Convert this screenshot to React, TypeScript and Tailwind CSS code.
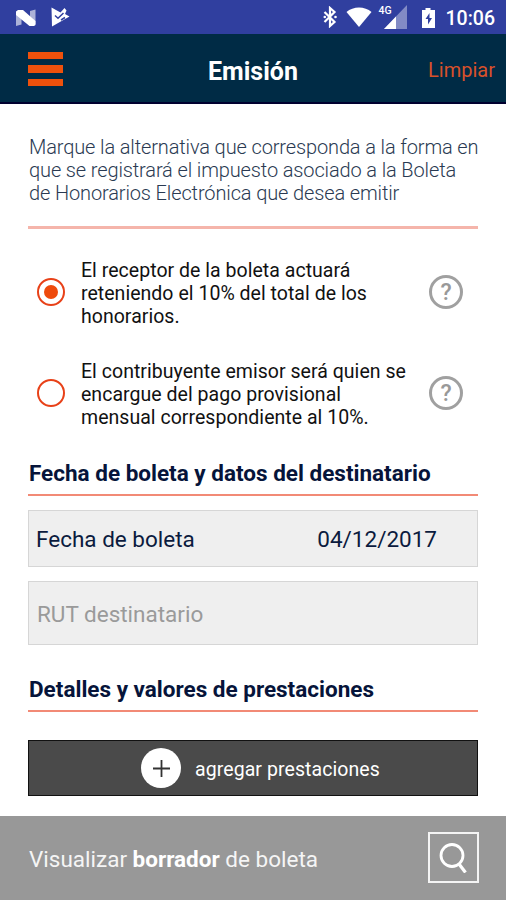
import { useState } from "react";

// ─── Types ───────────────────────────────────────────────

interface TaxOption {
  id: string;
  lines: string[];
}

// ─── Constants ───────────────────────────────────────────

const TAX_OPTIONS: TaxOption[] = [
  {
    id: "receptor",
    lines: ["El receptor de la boleta actuará", "reteniendo el 10% del total de los", "honorarios."],
  },
  {
    id: "emisor",
    lines: ["El contribuyente emisor será quien se", "encargue del pago provisional", "mensual correspondiente al 10%."],
  },
];

// ─── Status bar ──────────────────────────────────────────

function StatusBar() {
  return (
    <div className="flex h-[34px] shrink-0 items-center bg-[#303f9f] text-white">
      <svg className="ml-[15px] mt-px h-[18px] w-[22px]" viewBox="0 0 22 18" aria-hidden="true">
        <path d="M1 3h5.500v12.500L1 17zM15 2l5.500-1.500V15H15z" fill="#fff" opacity=".6" />
        <path d="M1 2.500L3 1h5L20.500 12v4l-1.500 1h-4.500L1 6z" fill="#fff" />
      </svg>
      <svg className="ml-[13px] h-5 w-5" viewBox="0 0 20 20" aria-hidden="true">
        <path d="M1.500.500l9 5L14.500 1l2 2.500-1.500 3.500 4.500 2.500L2 19.500z" fill="#fff" />
        <path d="M5 8.500l3 2.700L13.500 6M11 13l4-2.500" fill="none" stroke="#303f9f" strokeWidth="1.500" />
      </svg>
      <svg className="ml-auto h-[22px] w-[14px]" viewBox="0 0 14 22" aria-hidden="true">
        <path d="M1.500 6l10 10L7 20V2l4.500 4-10 10" fill="none" stroke="#fff" strokeWidth="2.200" />
        <circle cx="1.800" cy="11" r="1.300" fill="#fff" />
        <circle cx="12.500" cy="11" r="1.300" fill="#fff" />
      </svg>
      <svg className="ml-[9px] h-5 w-[26px]" viewBox="0 0 26 20" aria-hidden="true">
        <path d="M.5 5C7-1 19-1 25.500 5L13 20z" fill="#fff" />
      </svg>
      <div className="relative ml-[7px] h-6 w-[28px]">
        <svg className="absolute inset-0 h-6 w-7" viewBox="0 0 28 24" aria-hidden="true">
          <path d="M28 0v24H5z" fill="#fff" opacity=".4" />
          <path d="M17 11.500V24H5z" fill="#fff" />
        </svg>
        <span className="absolute left-0 top-px text-[10.500px] leading-[10px] font-medium">4G</span>
      </div>
      <svg className="ml-[14px] mt-0.5 h-5 w-[15px]" viewBox="0 0 15 20" aria-hidden="true">
        <path d="M1 2h3.500V0h5v2H14v18H1z" fill="#fff" />
        <path d="M8.500 5l-4 6h2.500v5.500l4-6.500H8.500z" fill="#303f9f" />
      </svg>
      <span className="mt-[3px] ml-[10px] mr-[11px] text-[19.500px] leading-none font-medium">10:06</span>
    </div>
  );
}

// ─── Header ──────────────────────────────────────────────

function Header() {
  return (
    <header className="grid h-[70px] shrink-0 grid-cols-3 items-center border-b-2 border-[#00002f] bg-[#002b45]">
      <button type="button" aria-label="Menú" className="mt-0.5 ml-[28px] flex w-[35px] flex-col gap-[6px]">
        <span className="h-[7.500px] bg-[#ee510c]" />
        <span className="h-[7.500px] bg-[#ee510c]" />
        <span className="h-[7.500px] bg-[#ee510c]" />
      </button>
      <h1 className="pt-1.5 text-center text-[25px] leading-none font-bold text-white">Emisión</h1>
      <button type="button" className="mr-[11px] pt-1 text-right text-[20px] leading-none text-[#d8512b]">
        Limpiar
      </button>
    </header>
  );
}

// ─── Tax option ──────────────────────────────────────────

function TaxOptionRow({
  option,
  checked,
  onSelect,
}: {
  option: TaxOption;
  checked: boolean;
  onSelect: () => void;
}) {
  return (
    <div className="flex items-center pl-[9px] pr-[15px]">
      <button
        type="button"
        role="radio"
        aria-checked={checked}
        aria-label={option.lines.join(" ")}
        onClick={onSelect}
        className="mb-1 flex size-7 shrink-0 items-center justify-center rounded-full border-[2.500px] border-[#e84118]"
      >
        {checked && <span className="size-[14px] rounded-full bg-[#ee4a0c]" />}
      </button>
      <p className="ml-4 flex-1 text-[19.500px] leading-[23px] tracking-[0.030px] whitespace-nowrap text-[#111]">
        {option.lines.map((line) => (
          <span key={line} className="block">
            {line}
          </span>
        ))}
      </p>
      <button
        type="button"
        aria-label="Ayuda"
        className="mb-1 flex size-[34px] shrink-0 items-center justify-center rounded-full border-3 border-[#a0a0a0] pt-0.5 text-[23px] leading-none font-medium text-[#999]"
      >
        ?
      </button>
    </div>
  );
}

function SectionTitle({ children }: { children: string }) {
  return (
    <h2 className="border-b-2 border-[#f28a76] pb-2 pl-px text-[22.500px] leading-[26px] font-bold whitespace-nowrap text-[#06143a]">
      {children}
    </h2>
  );
}

// ─── Page ────────────────────────────────────────────────

export default function App() {
  const [selected, setSelected] = useState("receptor");

  return (
    <div className="flex h-[900px] w-[506px] flex-col overflow-hidden bg-white font-['Roboto',sans-serif]">
      <StatusBar />
      <Header />

      <main className="flex flex-1 flex-col px-[28px] pt-[32px]">
        <p className="pl-px text-[20px] leading-[23px] font-light tracking-[-0.130px] whitespace-nowrap text-[#2a3a52]">
          Marque la alternativa que corresponda a la forma en
          <br />
          que se registrará el impuesto asociado a la Boleta
          <br />
          de Honorarios Electrónica que desea emitir
        </p>
        <div className="mt-[21px] h-[3px] bg-[#f5b5ab]" />

        <div role="radiogroup" className="mt-[30px] flex flex-col gap-8">
          {TAX_OPTIONS.map((option) => (
            <TaxOptionRow
              key={option.id}
              option={option}
              checked={selected === option.id}
              onSelect={() => setSelected(option.id)}
            />
          ))}
        </div>

        <div className="mt-[31px]">
          <SectionTitle>Fecha de boleta y datos del destinatario</SectionTitle>
        </div>
        <div className="mt-[14px] flex h-[57px] items-center justify-between border border-[#d6d6d6] bg-[#efefef] pt-0.5 pr-10 pl-[7px] text-[22.500px] text-[#0b1b3e]">
          <span>Fecha de boleta</span>
          <span>04/12/2017</span>
        </div>
        <div className="mt-[14px] flex h-[64px] items-center border border-[#d6d6d6] bg-[#efefef] pt-[3px] pl-2 text-[22.500px] text-[#9a9a9a]">
          RUT destinatario
        </div>

        <div className="mt-[31px]">
          <SectionTitle>Detalles y valores de prestaciones</SectionTitle>
        </div>
        <button
          type="button"
          className="mt-[28px] flex h-[56px] items-center border border-[#111] bg-[#4a4a4a] pl-[112px] text-[19.500px] text-white"
        >
          <span className="flex size-10 items-center justify-center rounded-full bg-white">
            <svg className="size-[17px]" viewBox="0 0 17 17" aria-hidden="true">
              <path d="M8.500 0v17M0 8.500h17" stroke="#333" strokeWidth="1.800" />
            </svg>
          </span>
          <span className="mt-[3px] ml-[14px] tracking-[0.080px]">agregar prestaciones</span>
        </button>
      </main>

      <footer className="flex h-[84px] shrink-0 items-center justify-between bg-[#989898] px-[28px] text-[22.500px] text-white">
        <span className="pt-[3px] pl-px whitespace-nowrap text-[#f5f5f5]">
          Visualizar <b className="font-bold text-white">borrador</b> de boleta
        </span>
        <button
          type="button"
          aria-label="Buscar"
          className="-mr-px mb-px flex size-[51px] items-center justify-center border-2 border-[#f4f4f4]"
        >
          <svg className="size-[30px]" viewBox="0 0 30 30" aria-hidden="true">
            <circle cx="13" cy="12.500" r="11" fill="none" stroke="#fff" strokeWidth="2.800" />
            <path d="M20 21l6.500 8.500" stroke="#fff" strokeWidth="3.200" />
          </svg>
        </button>
      </footer>
    </div>
  );
}
